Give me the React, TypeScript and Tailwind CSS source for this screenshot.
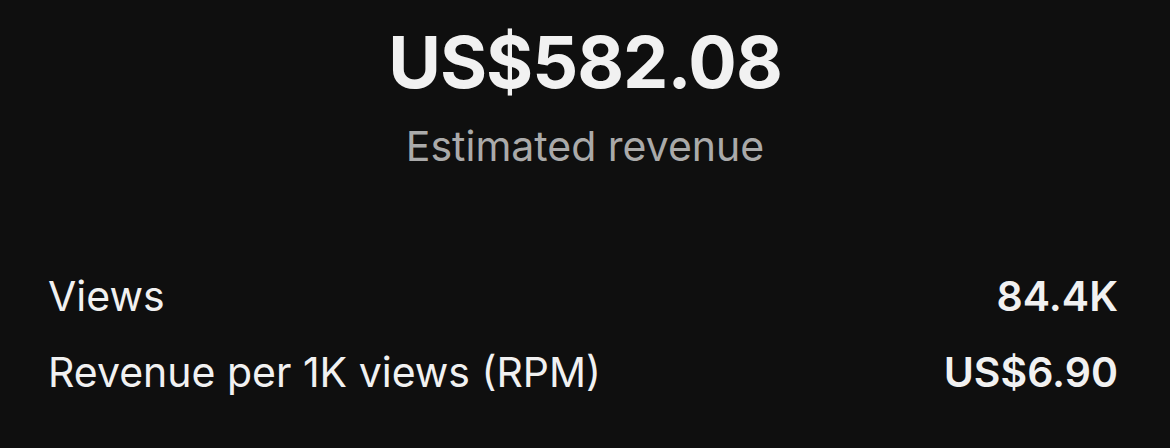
const rows = [
  { label: "Views", value: "84.4K" },
  { label: "Revenue per 1K views (RPM)", value: "US$6.90" },
];

export default function App() {
  return (
    <main className="h-[448px] w-[1170px] overflow-hidden bg-[#0f0f0f] font-['Inter',sans-serif] text-[#f1f1f1]">
      <section className="flex flex-col items-center pt-[22px]">
        <h1 className="text-[72px] font-bold leading-[80px] tracking-[-1px]">US$582.08</h1>
        <p className="mt-[18px] text-[41px] leading-[52px] text-[#aaaaaa]">Estimated revenue</p>
      </section>

      <section className="mt-[100px] flex flex-col gap-[28px] pl-[48px] pr-[52px]">
        {rows.map((row) => (
          <div key={row.label} className="flex items-center justify-between text-[41px] leading-[48px]">
            <span>{row.label}</span>
            <span className="font-semibold">{row.value}</span>
          </div>
        ))}
      </section>
    </main>
  );
}
